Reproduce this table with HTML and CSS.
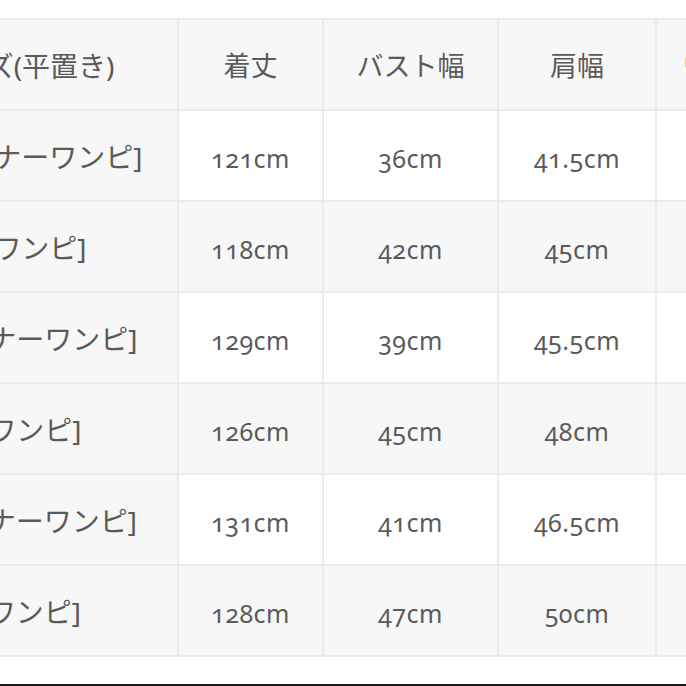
FILE: index.html
```html
<!DOCTYPE html>
<html lang="ja">
<head>
<meta charset="utf-8">
<link rel="stylesheet" href="styles.css">
</head>
<body>
<div class="page">
  <div class="frame">
    <table class="size-table">
      <colgroup>
        <col class="c-name"><col class="c-len"><col class="c-bust"><col class="c-shoulder"><col class="c-extra">
      </colgroup>
      <thead>
        <tr>
          <th class="name">サイズ(平置き)</th>
          <th>着丈</th>
          <th>バスト幅</th>
          <th>肩幅</th>
          <th>ウエスト</th>
        </tr>
      </thead>
      <tbody>
        <tr class="odd">
          <th class="name">M[インナーワンピ]</th>
          <td>121cm</td><td>36cm</td><td>41.5cm</td><td>32cm</td>
        </tr>
        <tr class="even">
          <th class="name">M[ワンピ]</th>
          <td>118cm</td><td>42cm</td><td>45cm</td><td>35cm</td>
        </tr>
        <tr class="odd">
          <th class="name">S[インナーワンピ]</th>
          <td>129cm</td><td>39cm</td><td>45.5cm</td><td>34cm</td>
        </tr>
        <tr class="even">
          <th class="name">S[ワンピ]</th>
          <td>126cm</td><td>45cm</td><td>48cm</td><td>37cm</td>
        </tr>
        <tr class="odd">
          <th class="name">L[インナーワンピ]</th>
          <td>131cm</td><td>41cm</td><td>46.5cm</td><td>36cm</td>
        </tr>
        <tr class="even">
          <th class="name">L[ワンピ]</th>
          <td>128cm</td><td>47cm</td><td>50cm</td><td>39cm</td>
        </tr>
      </tbody>
    </table>
  </div>
  <div class="rule"></div>
</div>
</body>
</html>
```

FILE: styles.css
```css
html, body {
  margin: 0;
  padding: 0;
  background: #ffffff;
}

.page {
  width: 686px;
  height: 686px;
  display: flex;
  flex-direction: column;
  overflow: hidden;
}

.frame {
  padding-top: 18px;
  overflow: hidden;
}

.size-table {
  margin-left: -134px;
  border-collapse: collapse;
  table-layout: fixed;
  width: 949px;
  font-family: "Noto Sans", "Noto Sans CJK JP", sans-serif;
  color: #5a5a5a;
}

.c-name { width: 311px; }
.c-len { width: 145px; }
.c-bust { width: 175px; }
.c-shoulder { width: 158px; }
.c-extra { width: 160px; }

.size-table th,
.size-table td {
  height: 89px;
  padding: 0;
  border: 2px solid #ebebeb;
  text-align: center;
  vertical-align: middle;
  font-weight: normal;
}

.size-table thead th {
  background: #f7f7f7;
  font-size: 27px;
}

.size-table th.name {
  background: #f7f7f7;
  font-size: 28px;
}

.size-table td {
  font-size: 25px;
  font-feature-settings: "onum" 1;
  letter-spacing: 0.5px;
  padding-top: 4px;
  height: 85px;
}

.size-table tr.odd td { background: #ffffff; }
.size-table tr.even td { background: #f7f7f7; }

.rule {
  margin-top: auto;
  height: 2px;
  background: #1a1a1a;
}
```
